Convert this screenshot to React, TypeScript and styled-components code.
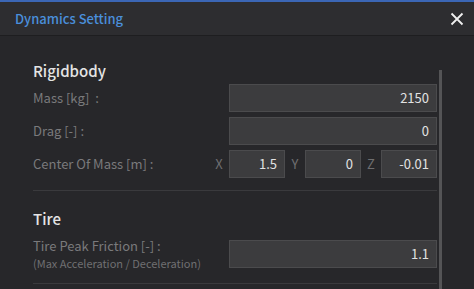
import styled, { createGlobalStyle } from 'styled-components'

const GlobalStyle = createGlobalStyle`
    html, body {
        margin: 0;
        padding: 0;
        background-color: #27272a;
        font-family: 'Noto Sans CJK KR', 'Noto Sans', sans-serif;
    }
    * {
        box-sizing: border-box;
    }
`

const Window = styled.div`
    width: 474px;
    height: 289px;
    overflow: hidden;
    background-color: #27272a;
    border-top: 2px solid #3b66b5;
`

const TitleBar = styled.header`
    height: 34px;
    display: flex;
    align-items: center;
    justify-content: space-between;
    padding: 0 9px 0 15px;
    background-color: #2d2d30;
    border-bottom: 1px solid #1e1e20;
`

const Title = styled.h1`
    margin: 0;
    font-size: 13px;
    line-height: 18px;
    font-weight: 500;
    color: #4a8fdb;
`

const CloseButton = styled.button`
    border: none;
    background: none;
    padding: 0;
    width: 16px;
    height: 16px;
    display: flex;
    align-items: center;
    justify-content: center;
    cursor: pointer;
`

const Body = styled.div`
    display: flex;
    padding-left: 33px;
`

const Content = styled.div`
    flex: 0 0 404px;
`

const ScrollThumb = styled.div`
    flex: 0 0 3px;
    height: 260px;
    margin: 34px 0 0 2px;
    background-color: #545456;
`

const Section = styled.section<{ $top: number }>`
    padding-top: ${(p) => p.$top}px;
    padding-bottom: 12px;
    border-bottom: 1px solid #3a3a3d;
`

const Heading = styled.h2<{ $gap: number }>`
    margin: 0 0 ${(p) => p.$gap}px;
    font-size: 15px;
    line-height: 20px;
    font-weight: 500;
    color: #e4e4e4;
`

const Rows = styled.div`
    display: flex;
    flex-direction: column;
    gap: 5px;
`

const Row = styled.div`
    display: flex;
    align-items: center;
`

const Label = styled.div<{ $width: number }>`
    flex: 0 0 ${(p) => p.$width}px;
    font-size: 13px;
    line-height: 18px;
    color: #7a7a7c;
    white-space: pre;
`

const SubLabel = styled.div`
    font-size: 11px;
    line-height: 16px;
    color: #707072;
`

const LabelLine = styled.div`
    line-height: 18px;
`

const Field = styled.div<{ $width: number }>`
    flex: 0 0 ${(p) => p.$width}px;
    height: 28px;
    display: flex;
    align-items: center;
    justify-content: flex-end;
    padding-right: 7px;
    background-color: #3c3c3e;
    border: 1px solid #4b4b4d;
    font-size: 13px;
    line-height: 18px;
    color: #e2e2e2;
`

const Axis = styled.div`
    flex: 0 0 20px;
    text-align: center;
    font-size: 13px;
    line-height: 18px;
    color: #6e6e70;
`

function CloseIcon() {
    return (
        <svg width="14" height="14" viewBox="0 0 14 14">
            <path d="M1.5 1.5 L12.5 12.5 M12.5 1.5 L1.5 12.5" stroke="#f0f0f0" strokeWidth="1.8" />
        </svg>
    )
}

const axes = [
    { name: 'X', value: '1.5' },
    { name: 'Y', value: '0' },
    { name: 'Z', value: '-0.01' },
]

export default function App() {
    return (
        <>
            <GlobalStyle />
            <Window>
                <TitleBar>
                    <Title>Dynamics Setting</Title>
                    <CloseButton type="button">
                        <CloseIcon />
                    </CloseButton>
                </TitleBar>
                <Body>
                    <Content>
                        <Section $top={25}>
                            <Heading $gap={3}>Rigidbody</Heading>
                            <Rows>
                                <Row>
                                    <Label $width={196}>{'Mass [kg]  :'}</Label>
                                    <Field $width={208}>2150</Field>
                                </Row>
                                <Row>
                                    <Label $width={196}>{'Drag [-] :'}</Label>
                                    <Field $width={208}>0</Field>
                                </Row>
                                <Row>
                                    <Label $width={176}>{'Center Of Mass [m] :'}</Label>
                                    {axes.map((a) => (
                                        <Row key={a.name}>
                                            <Axis>{a.name}</Axis>
                                            <Field $width={56}>{a.value}</Field>
                                        </Row>
                                    ))}
                                </Row>
                            </Rows>
                        </Section>
                        <Section $top={18}>
                            <Heading $gap={8}>Tire</Heading>
                            <Row>
                                <Label $width={196}>
                                    <LabelLine>{'Tire Peak Friction [-] :'}</LabelLine>
                                    <SubLabel>(Max Acceleration / Deceleration)</SubLabel>
                                </Label>
                                <Field $width={208}>1.1</Field>
                            </Row>
                        </Section>
                    </Content>
                    <ScrollThumb />
                </Body>
            </Window>
        </>
    )
}
